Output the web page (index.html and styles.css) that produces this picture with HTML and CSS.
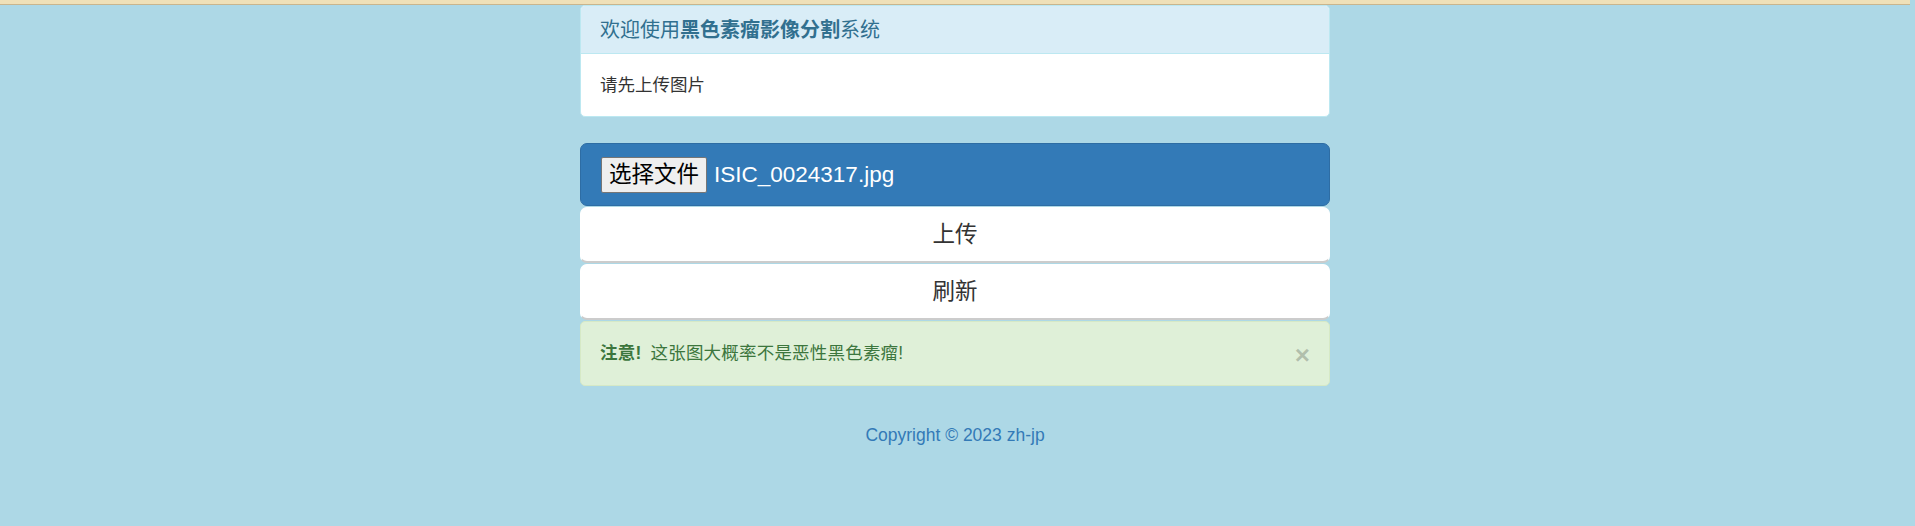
FILE: index.html
```html
<!DOCTYPE html>
<html lang="zh-CN">
<head>
<meta charset="utf-8">
<title>黑色素瘤影像分割系统</title>
<link rel="stylesheet" href="styles.css">
</head>
<body>
<div class="topbar"></div>
<div class="container">
  <div class="panel">
    <div class="panel-heading">欢迎使用<b>黑色素瘤影像分割</b>系统</div>
    <div class="panel-body">请先上传图片</div>
  </div>
  <div class="file-box">
    <span class="file-btn">选择文件</span>
    <span class="file-name">ISIC_0024317.jpg</span>
  </div>
  <div class="btn">上传</div>
  <div class="btn">刷新</div>
  <div class="alert">
    <span class="alert-text"><b>注意!</b> 这张图大概率不是恶性黑色素瘤!</span>
    <span class="close">×</span>
  </div>
  <div class="footer">Copyright © 2023 zh-jp</div>
</div>
</body>
</html>
```

FILE: styles.css
```css
* { box-sizing: border-box; }
html, body {
  margin: 0;
  background: #add8e6;
}
body {
  padding-right: 5px;
  font-family: "Liberation Sans", "Noto Sans CJK SC", sans-serif;
  font-size: 17.5px;
  line-height: 25px;
  color: #333;
}
.topbar {
  height: 5px;
  background: #efe0b8;
  border-bottom: 1px solid #c8b58e;
}
.container {
  width: 750px;
  margin: 0 auto;
}
.panel {
  background: #fff;
  border: 1px solid #bce8f1;
  border-radius: 5px;
  margin-bottom: 26px;
  overflow: hidden;
}
.panel-heading {
  background: #d9edf7;
  color: #31708f;
  border-bottom: 1px solid #bce8f1;
  padding: 12.5px 19px;
  font-size: 20px;
  line-height: 22px;
}
.panel-heading b { font-weight: bold; }
.panel-body {
  padding: 18.5px 19px;
  line-height: 25px;
}
.file-box {
  display: flex;
  align-items: center;
  gap: 7px;
  background: #337ab7;
  border: 1px solid #2e6da4;
  border-radius: 7px;
  padding: 12.5px 20px;
  height: 63px;
}
.file-btn {
  display: inline-flex;
  align-items: center;
  height: 36px;
  padding: 0 7px;
  background: #efefef;
  border: 1px solid #767676;
  border-radius: 2px;
  color: #000;
  font-size: 22.5px;
}
.file-name {
  color: #fff;
  font-size: 22.5px;
}
.btn {
  height: 56px;
  margin-top: 1px;
  background: #fff;
  border: 1px solid #fff;
  border-bottom: 2px solid #ccc;
  border-radius: 7px;
  display: flex;
  align-items: center;
  justify-content: center;
  font-size: 22.5px;
  color: #333;
}
.alert {
  margin-top: 1px;
  height: 65px;
  display: flex;
  align-items: center;
  justify-content: space-between;
  background: #dff0d8;
  border: 1px solid #d6e9c6;
  border-radius: 5px;
  padding: 0 19px;
  color: #3c763d;
}
.alert b { font-weight: bold; margin-right: 4px; }
.alert-text { letter-spacing: 0.2px; }
.close {
  font-size: 26px;
  font-weight: bold;
  line-height: 1;
  color: #000;
  opacity: 0.2;
  text-shadow: 0 1px 0 #fff;
  margin-top: 2px;
}
.footer {
  margin-top: 37px;
  text-align: center;
  color: #337ab7;
  line-height: 25px;
}
```
